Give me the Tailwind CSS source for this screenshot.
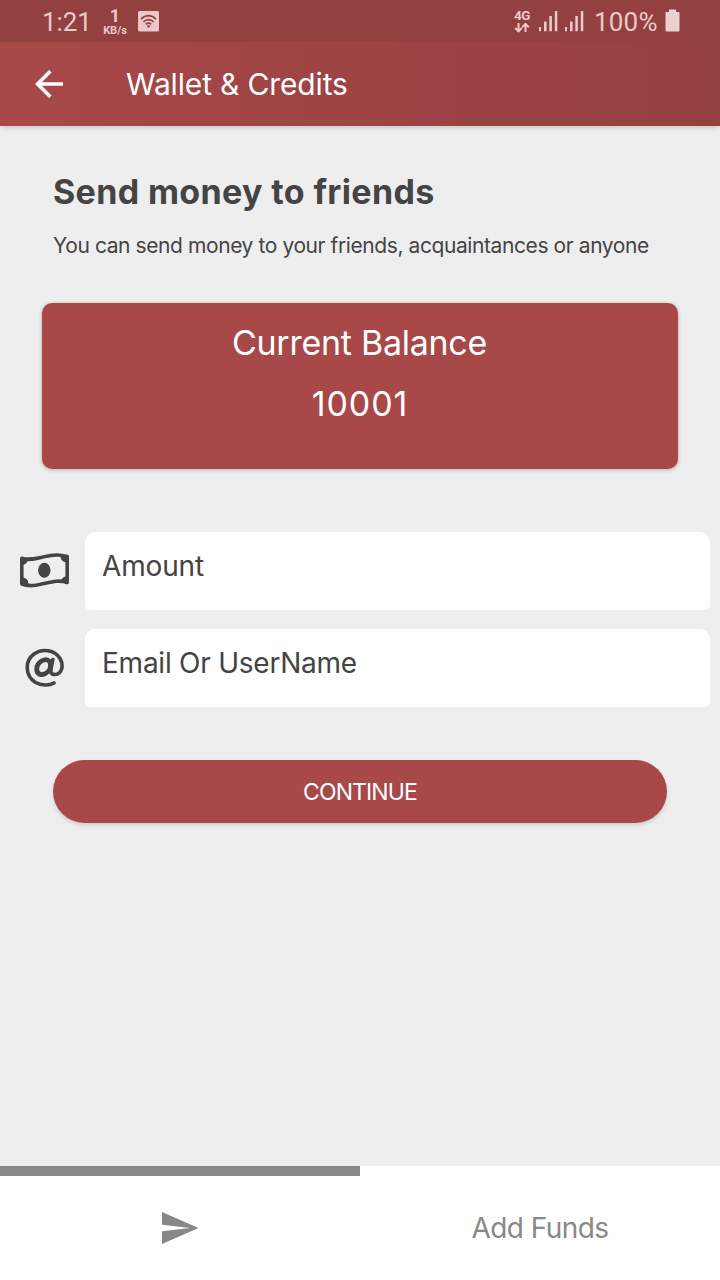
<!DOCTYPE html>
<html lang="en">
<head>
<meta charset="utf-8">
<title>Wallet &amp; Credits</title>
<script src="https://cdn.jsdelivr.net/npm/@tailwindcss/browser@4"></script>
</head>
<body class="w-[720px] h-[1280px] overflow-hidden bg-[#eeeeee] text-[#444444] font-['Inter',sans-serif] flex flex-col whitespace-nowrap">
  <div class="h-[42px] shrink-0 bg-[#934041] text-[#ebc9ca] font-['Roboto',sans-serif] flex items-start relative z-10">
    <span class="ml-[42px] mt-[7px] w-[60px] text-[26px] leading-[30px] tracking-[-0.1px]">1:21</span>
    <div class="w-[26px] mt-[7px] flex flex-col items-center font-bold">
      <span class="text-[18px] leading-[18px]">1</span>
      <span class="text-[11px] leading-[11px]">KB/s</span>
    </div>
    <svg class="ml-[10px] mt-[11px]" width="21" height="21" viewBox="0 0 21 21">
      <rect width="21" height="20.5" rx="1.5" fill="#ebc9ca"/>
      <g fill="none" stroke="#934041" stroke-width="1.6"><path d="M3 8.2Q10.500 1.200 18 8.200"/><path d="M5.400 10.900Q10.500 6.200 15.600 10.900"/><path d="M7.700 13.300Q10.500 10.900 13.300 13.300"/></g>
      <circle cx="10.500" cy="15.300" r="1.300" fill="#934041"/>
    </svg>
    <div class="ml-auto mt-[8px] w-[18px] flex flex-col items-center">
      <span class="text-[13.500px] leading-[14px] font-bold tracking-[-0.5px]">4G</span>
      <svg width="16" height="11" viewBox="0 0 16 11" fill="none" stroke="#ebc9ca" stroke-width="2"><path d="M4.500 1v8M1.200 6l3.300 3.300L7.800 6M11.500 10V2M8.200 5.200l3.300-3.300L14.800 5.200"/></svg>
    </div>
    <svg class="ml-[8px] mt-[11px]" width="46" height="21" viewBox="0 0 46 21" fill="#ebc9ca"><path d="M0 16h2v4.300H0zM5 10.500h2.600v9.800H5zM10.300 5h2.600v15.300h-2.600zM15.800 0h2.500v20.300h-2.500zM26 16h2v4.300h-2zM31 10.500h2.600v9.800H31zM36.300 5h2.600v15.300h-2.600zM41.800 0h2.500v20.300h-2.500z"/></svg>
    <span class="ml-[9px] mt-[7px] w-[66px] text-[26px] leading-[30px] tracking-[0.2px]">100%</span>
    <svg class="ml-[5px] mt-[9px] mr-[40px]" width="15" height="23" viewBox="0 0 15 23" fill="#ebd0d0"><path d="M4 0.500h7v2.500h2.500a1 1 0 0 1 1 1v17.500a1 1 0 0 1-1 1h-12a1 1 0 0 1-1-1V4a1 1 0 0 1 1-1H4z"/></svg>
  </div>
  <header class="h-[84px] shrink-0 flex items-center bg-linear-to-r from-[#a84849] to-[#934041] text-white shadow-[0_1px_6px_rgba(0,0,0,0.2)]">
    <svg class="ml-[34px]" width="30" height="30" viewBox="0 0 30 30" fill="none" stroke="white" stroke-width="3.600"><path d="M29 15H3.500M16.300 2.300L3.600 15l12.700 12.700"/></svg>
    <h1 class="ml-[62px] text-[30px] leading-[36px] tracking-[-0.15px]">Wallet &amp; Credits</h1>
  </header>
  <main class="flex-1 flex flex-col">
    <h2 class="ml-[53px] mt-[45px] text-[34px] leading-[42px] font-bold tracking-[0.36px]">Send money to friends</h2>
    <p class="ml-[53px] mt-[20px] text-[21px] leading-[26px] tracking-[-0.41px]">You can send money to your friends, acquaintances or anyone</p>
    <section class="mx-[42px] mt-[44px] h-[166px] rounded-[10px] bg-[#a84849] text-white text-center text-[34px] shadow-[0_1px_4px_rgba(0,0,0,0.25)]">
      <div class="mt-[19px] mr-px leading-[42px] tracking-[-0.27px]">Current Balance</div>
      <div class="mt-[19px] leading-[42px] tracking-[0.9px]">10001</div>
    </section>
    <div class="mt-[63px] mr-[10px] flex items-center">
      <svg class="ml-[19px] mr-[15px]" width="51" height="38" viewBox="0 0 51 38">
        <path d="M2.800 6.200C15 11 30-1 48.200 4.500V30.500C34 25 18 38 2.800 32Z" fill="none" stroke="#444" stroke-width="3.600" stroke-linejoin="round"/>
        <path d="M3 7h6a6 6 0 0 1-6 6zM48 5h-6.500a6 6 0 0 0 6.500 5.500zM3 32v-6.500a6 6 0 0 1 6.500 6.500zM48 31v-6.500a6 6 0 0 0-6.500 5.500z" fill="#444"/>
        <ellipse cx="25.300" cy="18.300" rx="6.200" ry="7.500" fill="#444"/>
      </svg>
      <div class="flex-1 h-[78px] rounded-t-[10px] rounded-b-[5px] bg-[#fefefe] px-[17px] pt-[17px] text-[28px] leading-[34px] tracking-[-0.15px]">Amount</div>
    </div>
    <div class="mt-[19px] mr-[10px] flex items-center">
      <svg class="ml-[24px] mr-[20px]" width="41" height="41" viewBox="0 0 41 41" fill="none" stroke="#444">
        <path d="M30 35C25 38 17 37.500 11.500 34.500C1 28 .500 13 10 6C18 0 31 2 36 10.500C40 17.500 38 26 31 26.500C27.500 26.700 26.500 25 27 21.500L28.800 11.500" stroke-width="3.600" stroke-linecap="round"/>
        <path d="M26.500 17.500C26.500 13 24 11.300 20.500 11.800C16 12.500 12.500 17 12.700 21.500C13 26 17 27.500 20.500 26C24.500 24.500 26.500 20.500 26.500 17.500Z" stroke-width="4.800"/>
      </svg>
      <div class="flex-1 h-[78px] rounded-t-[10px] rounded-b-[5px] bg-[#fefefe] px-[17px] pt-[17px] text-[28px] leading-[34px] tracking-[-0.24px]">Email Or UserName</div>
    </div>
    <button class="mx-[53px] mt-[53px] h-[63px] rounded-full bg-[#a84849] text-white text-[23px] leading-[28px] tracking-[-0.9px] shadow-[0_2px_4px_rgba(0,0,0,0.15)]">CONTINUE</button>
  </main>
  <nav class="h-[114px] shrink-0 bg-[#fefefe] text-[#888888]">
    <div class="h-[10px] w-[360px] bg-[#888888]"></div>
    <div class="h-[104px] grid grid-cols-2 items-center justify-items-center">
      <svg class="ml-px" width="38" height="32" viewBox="0 0 38 32" fill="#888"><path d="M0 0L36.500 16L0 32V19.300L28 16L0 12.700z"/></svg>
      <span class="text-[28px] leading-[34px] tracking-[-0.55px]">Add Funds</span>
    </div>
  </nav>
</body>
</html>
